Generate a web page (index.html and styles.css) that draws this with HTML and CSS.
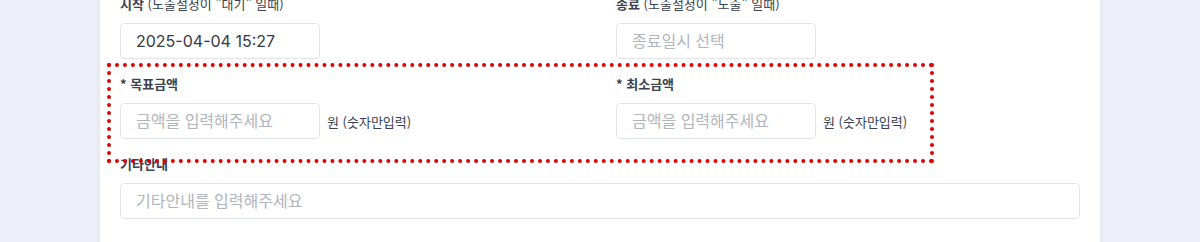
FILE: index.html
```html
<!DOCTYPE html>
<html lang="ko">
<head>
<meta charset="utf-8">
<title>Form</title>
<link rel="stylesheet" href="styles.css">
</head>
<body>
<div class="page">
  <div class="card">
    <div class="grid">
      <div class="field">
        <label class="label"><b>시작</b> (노출설정이 "대기" 일때)</label>
        <div class="control"><input class="input" type="text" value="2025-04-04 15:27"></div>
      </div>
      <div class="field">
        <label class="label"><b>종료</b> (노출설정이 "노출" 일때)</label>
        <div class="control"><input class="input" type="text" placeholder="종료일시 선택"></div>
      </div>
      <div class="field">
        <label class="label"><b>* 목표금액</b></label>
        <div class="control"><input class="input" type="text" placeholder="금액을 입력해주세요"><span class="unit">원 (숫자만입력)</span></div>
      </div>
      <div class="field">
        <label class="label"><b>* 최소금액</b></label>
        <div class="control"><input class="input" type="text" placeholder="금액을 입력해주세요"><span class="unit">원 (숫자만입력)</span></div>
      </div>
      <div class="field wide">
        <label class="label"><b>기타안내</b></label>
        <div class="control"><input class="input full" type="text" placeholder="기타안내를 입력해주세요"></div>
      </div>
    </div>
    <div class="highlight"></div>
  </div>
</div>
</body>
</html>
```

FILE: styles.css
```css
* { box-sizing: border-box; }
html, body { margin: 0; padding: 0; }
body {
  background: #edf0f9;
  font-family: "Inter", "Noto Sans CJK KR", sans-serif;
  color: #3b4250;
  overflow: hidden;
}
.page {
  margin-top: -26px;
  padding: 0 100px;
}
.card {
  position: relative;
  background: #ffffff;
  padding: 20px 20px 40px;
  box-shadow: 0 0 8px rgba(40, 50, 90, 0.06);
  min-height: 320px;
}
.grid {
  display: grid;
  grid-template-columns: 464px 464px;
  column-gap: 32px;
}
.field {
  margin-bottom: 15px;
}
.field.wide { grid-column: 1 / 3; }
.label {
  display: block;
  font-family: "Noto Sans CJK KR", sans-serif;
  font-size: 13px;
  line-height: 20px;
  height: 20px;
  margin-bottom: 9px;
  color: #3a4150;
}
.label b { font-weight: 700; }
.control {
  display: flex;
  align-items: center;
  gap: 7px;
}
.input {
  width: 200px;
  height: 36px;
  border: 1px solid #e1e4ea;
  border-radius: 4px;
  padding: 0 15px;
  font-family: "Inter", "Noto Sans CJK KR", sans-serif;
  font-size: 16px;
  color: #363a44;
  background: #fff;
  outline: none;
}
.input::placeholder {
  color: #b0b5be;
  font-family: "Noto Sans CJK KR", sans-serif;
}
.input.full { width: 100%; }
.unit {
  font-family: "Noto Sans CJK KR", sans-serif;
  font-size: 13px;
  color: #3a4150;
}
.highlight {
  position: absolute;
  left: 7px;
  top: 89px;
  width: 827px;
  height: 100px;
  border: 4px dotted #e00000;
  pointer-events: none;
}
```
